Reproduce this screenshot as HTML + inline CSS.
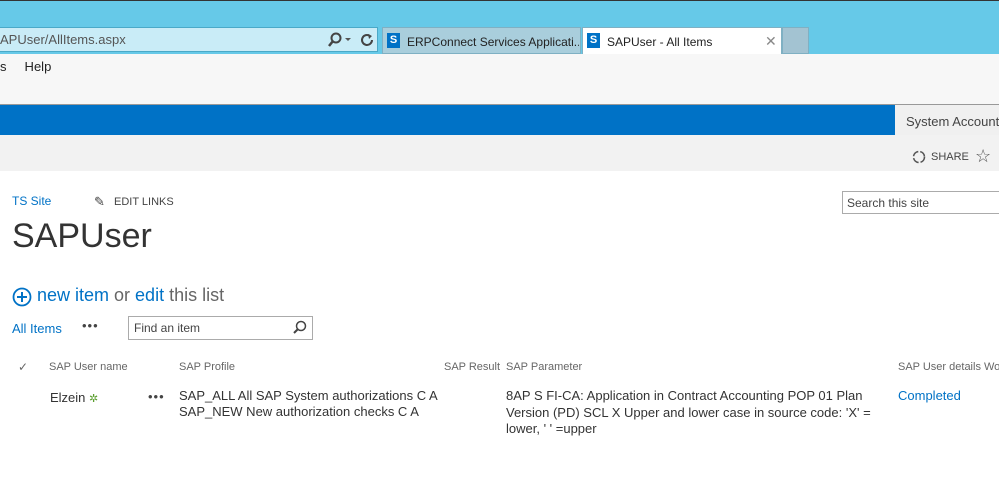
<!DOCTYPE html>
<html><head><style>
*{margin:0;padding:0;box-sizing:border-box}
body{width:999px;height:479px;overflow:hidden;background:#fff;font-family:"Liberation Sans",sans-serif;color:#444;position:relative}
.a{position:absolute;white-space:nowrap}
</style></head><body>
<div class="a" style="left:0;top:0;width:999px;height:54px;background:#66c9e8;border-top:1px solid #333"></div>
<div class="a" style="left:0;top:27px;width:378px;height:25px;background:#c9ecf7;border:1px solid #4aa9c8;border-left:none"></div>
<div class="a" style="left:0;top:32px;font-size:13px;color:#555">APUser/AllItems.aspx</div>
<svg class="a" style="left:326px;top:32px" width="50" height="16"><circle cx="10" cy="6" r="4.5" fill="none" stroke="#444" stroke-width="2"/><path d="M7 9 L3 14" stroke="#444" stroke-width="2.5"/><path d="M19 6 l3 3 3-3z" fill="#555"/><path d="M44 4 a5 5 0 1 0 2 4" fill="none" stroke="#444" stroke-width="2"/><path d="M42 2 l4 2 -3 3z" fill="#444"/></svg>
<div class="a" style="left:382px;top:27px;width:199px;height:27px;background:#a9cedc;border:1px solid #7fb0c3"></div>
<div class="a" style="left:582px;top:27px;width:200px;height:27px;background:#fff;border:1px solid #7fb0c3;border-bottom:none"></div>
<div class="a" style="left:782px;top:27px;width:27px;height:27px;background:#a3c3d2;border:1px solid #7fb0c3"></div>
<div class="a" style="left:387px;top:33px;width:13px;height:15px;background:#0072c6;color:#fff;font-size:11px;font-weight:bold;text-align:center;line-height:15px">S</div>
<div class="a" style="left:407px;top:35px;font-size:12px;color:#222;width:172px;overflow:hidden">ERPConnect Services Applicati...</div>
<div class="a" style="left:587px;top:33px;width:13px;height:15px;background:#0072c6;color:#fff;font-size:11px;font-weight:bold;text-align:center;line-height:15px">S</div>
<div class="a" style="left:607px;top:35px;font-size:12px;color:#222">SAPUser - All Items</div>
<div class="a" style="left:765px;top:33px;font-size:14px;color:#888">✕</div>
<div class="a" style="left:0;top:54px;width:999px;height:51px;background:#f7f7f7;border-bottom:1px solid #999"></div>
<div class="a" style="left:0;top:59px;font-size:13px;color:#222">s&nbsp;&nbsp;&nbsp;&nbsp;&nbsp;Help</div>
<div class="a" style="left:0;top:105px;width:895px;height:30px;background:#0072c6"></div>
<div class="a" style="left:895px;top:105px;width:104px;height:30px;background:#f0f0f0"></div>
<div class="a" style="left:906px;top:114px;font-size:13px;color:#444">System Account</div>
<div class="a" style="left:0;top:135px;width:999px;height:36px;background:#f2f2f2"></div>
<svg class="a" style="left:911px;top:149px" width="16" height="16"><circle cx="8" cy="8" r="5.5" fill="none" stroke="#555" stroke-width="1.6" stroke-dasharray="7 2"/></svg>
<div class="a" style="left:931px;top:151px;font-size:11px;color:#444">SHARE</div>
<div class="a" style="left:975px;top:146px;font-size:18px;color:#555">☆</div>
<div class="a" style="left:12px;top:194px;font-size:12px;color:#0072c6">TS Site</div>
<div class="a" style="left:94px;top:194px;font-size:13px;color:#444">✎</div>
<div class="a" style="left:114px;top:196px;font-size:11px;color:#444">EDIT LINKS</div>
<div class="a" style="left:12px;top:217px;font-size:34px;color:#333;font-weight:300">SAPUser</div>
<div class="a" style="left:842px;top:191px;width:160px;height:23px;border:1px solid #ababab"></div>
<div class="a" style="left:847px;top:196px;font-size:12px;color:#444">Search this site</div>
<svg class="a" style="left:12px;top:287px" width="20" height="20"><circle cx="10" cy="10" r="8.5" fill="none" stroke="#0072c6" stroke-width="1.8"/><path d="M10 5v10M5 10h10" stroke="#0072c6" stroke-width="2"/></svg>
<div class="a" style="left:37px;top:285px;font-size:18px;color:#0072c6">new item <span style="color:#666">or</span> edit <span style="color:#666">this list</span></div>
<div class="a" style="left:12px;top:321px;font-size:13px;color:#0072c6">All Items</div>
<div class="a" style="left:82px;top:318px;font-size:13px;color:#444;letter-spacing:1px">•••</div>
<div class="a" style="left:128px;top:316px;width:185px;height:24px;border:1px solid #ababab"></div>
<div class="a" style="left:134px;top:321px;font-size:12px;color:#444">Find an item</div>
<svg class="a" style="left:292px;top:320px" width="16" height="16"><circle cx="9" cy="6" r="4.5" fill="none" stroke="#444" stroke-width="1.5"/><path d="M6 9l-4 4" stroke="#444" stroke-width="2"/></svg>
<div class="a" style="left:18px;top:360px;font-size:12px;color:#666">✓</div>
<div class="a" style="left:49px;top:361px;font-size:11px;color:#666">SAP User name</div>
<div class="a" style="left:179px;top:361px;font-size:11px;color:#666">SAP Profile</div>
<div class="a" style="left:444px;top:361px;font-size:11px;color:#666">SAP Result</div>
<div class="a" style="left:506px;top:361px;font-size:11px;color:#666">SAP Parameter</div>
<div class="a" style="left:898px;top:361px;font-size:11px;color:#666">SAP User details Wor</div>
<div class="a" style="left:50px;top:390px;font-size:13px;color:#333">Elzein <span style="color:#5a9e2e;font-size:11px">✲</span></div>
<div class="a" style="left:148px;top:389px;font-size:13px;color:#444;letter-spacing:1px">•••</div>
<div class="a" style="left:179px;top:388px;font-size:13px;color:#333;line-height:16px">SAP_ALL All SAP System authorizations C A<br>SAP_NEW New authorization checks C A</div>
<div class="a" style="left:506px;top:388px;font-size:13px;color:#333;line-height:16.5px">8AP S FI-CA: Application in Contract Accounting POP 01 Plan<br>Version (PD) SCL X Upper and lower case in source code: 'X' =<br>lower, ' ' =upper</div>
<div class="a" style="left:898px;top:388px;font-size:13px;color:#0072c6">Completed</div>
</body></html>
